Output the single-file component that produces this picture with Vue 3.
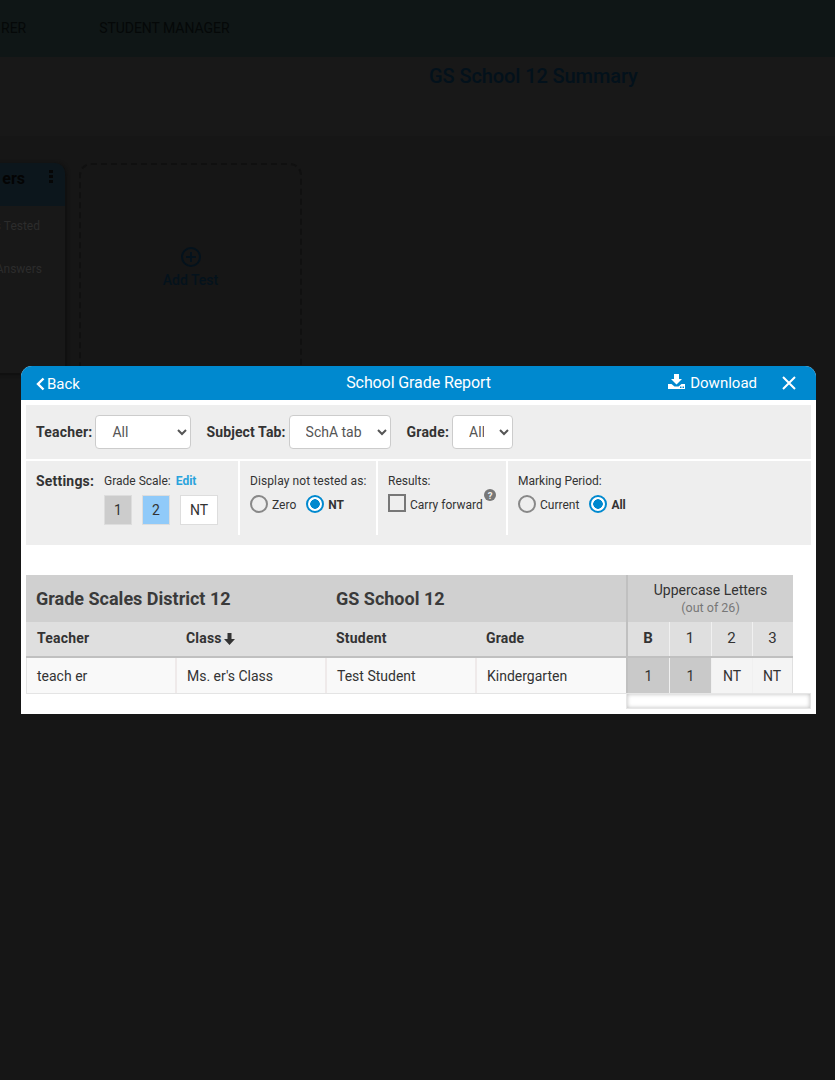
<script setup>
const columns = [
  { label: 'Teacher', value: 'teach er' },
  { label: 'Class', value: "Ms. er's Class", sorted: true },
  { label: 'Student', value: 'Test Student' },
  { label: 'Grade', value: 'Kindergarten' },
];
const scores = [
  { label: 'B', value: '1', bold: true, shaded: true },
  { label: '1', value: '1', shaded: true },
  { label: '2', value: 'NT' },
  { label: '3', value: 'NT' },
];
</script>

<template>
  <main class="page">
    <header class="topbar">
      <span class="nav-cut">RER</span>
      <span class="nav-item">STUDENT MANAGER</span>
    </header>
    <section class="titlebar">
      <h1>GS School 12 Summary</h1>
    </section>
    <section class="cards">
      <article class="test-card">
        <div class="test-head">
          <span>ers</span>
          <i class="dots"><b></b><b></b><b></b></i>
        </div>
        <p class="tested">s Tested</p>
        <p class="answers">Answers</p>
      </article>
      <article class="add-card">
        <svg width="22" height="22" viewBox="0 0 22 22" fill="none" stroke="#04121c" stroke-width="2">
          <circle cx="11" cy="11" r="9" />
          <path d="M11 6v10M6 11h10" />
        </svg>
        <span>Add Test</span>
      </article>
    </section>

    <div class="modal">
      <div class="modal-head">
        <a class="back">
          <svg width="9" height="14" viewBox="0 0 9 14" fill="none" stroke="#fff" stroke-width="2.4">
            <path d="M7.500 1.500 2 7l5.500 5.500" />
          </svg>
          Back
        </a>
        <span class="modal-title">School Grade Report</span>
        <a class="download">
          <svg width="17" height="15" viewBox="0 0 17 15">
            <path fill="#fff" d="M6 0h5v5h3l-5.500 5.500L3 5h3z" />
            <path fill="#fff" d="M0 10h3.500l3 2.500h4l3-2.500H17v5H0z" />
            <path fill="#0089cf" d="M12 12.500h1.500V14H12zM14.500 12.500H16V14h-1.500z" />
          </svg>
          Download
        </a>
        <svg class="close" width="14" height="14" viewBox="0 0 14 14" stroke="#fff" stroke-width="2">
          <path d="M1 1l12 12M13 1 1 13" />
        </svg>
      </div>

      <div class="modal-body">
        <div class="filters">
          <label>Teacher:</label>
          <select class="sel-teacher"><option>All</option></select>
          <label class="next subject">Subject Tab:</label>
          <select class="sel-subject"><option>SchA tab</option></select>
          <label class="next grade">Grade:</label>
          <select class="sel-grade"><option>All</option></select>
        </div>

        <div class="settings">
          <div class="seg seg-scale">
            <strong class="settings-label">Settings:</strong>
            <div>
              <div class="seg-title">Grade Scale: <a class="edit">Edit</a></div>
              <div class="chips">
                <span class="chip chip-grey">1</span>
                <span class="chip chip-blue">2</span>
                <span class="chip chip-white">NT</span>
              </div>
            </div>
          </div>
          <div class="seg seg-display">
            <div class="seg-title">Display not tested as:</div>
            <div class="radios">
              <span class="radio"></span><span class="opt">Zero</span>
              <span class="radio on"></span><span class="opt sel">NT</span>
            </div>
          </div>
          <div class="seg seg-results">
            <div class="seg-title">Results:</div>
            <div class="radios">
              <span class="check"></span><span class="opt">Carry forward</span>
              <svg class="help" width="12" height="12" viewBox="0 0 12 12">
                <circle cx="6" cy="6" r="6" fill="#777" />
                <text x="6" y="9.500" text-anchor="middle" font-size="9.500" font-weight="700" fill="#eee" font-family="Roboto, sans-serif">?</text>
              </svg>
            </div>
          </div>
          <div class="seg seg-period">
            <div class="seg-title">Marking Period:</div>
            <div class="radios">
              <span class="radio"></span><span class="opt">Current</span>
              <span class="radio on"></span><span class="opt sel">All</span>
            </div>
          </div>
        </div>

        <div class="report">
          <div class="report-main">
            <div class="band">
              <span class="band-district">Grade Scales District 12</span>
              <span class="band-school">GS School 12</span>
            </div>
            <div class="cols cols-head">
              <div v-for="c in columns" :key="c.label" class="col-head">
                {{ c.label }}
                <svg v-if="c.sorted" width="11" height="12" viewBox="0 0 11 12" fill="#333">
                  <path d="M3.500 0h4v6H11l-5.500 6L0 6h3.500z" />
                </svg>
              </div>
            </div>
            <div class="cols cols-row">
              <div v-for="c in columns" :key="c.label" class="col-cell">{{ c.value }}</div>
            </div>
          </div>
          <div class="report-side">
            <div class="side-band">
              <div>Uppercase Letters</div>
              <small>(out of 26)</small>
            </div>
            <div class="score-head">
              <div v-for="(s, i) in scores" :key="i" :class="{ bold: s.bold }">{{ s.label }}</div>
            </div>
            <div class="score-row">
              <div v-for="(s, i) in scores" :key="i" :class="{ shaded: s.shaded }">{{ s.value }}</div>
            </div>
            <div class="scrollbar"></div>
          </div>
        </div>
      </div>
    </div>
  </main>
</template>

<style>
html, body { background: #161616; }
</style>

<style scoped>
.page {
  position: relative;
  width: 835px;
  height: 1080px;
  overflow: hidden;
  background: #161616;
  font-family: Roboto, "Liberation Sans", sans-serif;
  color: #333;
}
.topbar {
  height: 57px;
  background: #0f1616;
  display: flex;
  align-items: center;
  font-size: 14px;
  color: #050808;
  padding-bottom: 1px;
  box-sizing: border-box;
}
.nav-cut { margin-left: 1px; }
.nav-item { margin-left: 73px; letter-spacing: -0.05px; }
.titlebar {
  height: 79px;
  background: #181818;
  padding-left: 429px;
  box-sizing: border-box;
}
.titlebar h1 {
  margin: 0;
  padding-top: 7px;
  font-size: 20px;
  line-height: 24px;
  font-weight: 500;
  letter-spacing: -0.1px;
  color: #03111b;
}
.cards {
  display: flex;
  gap: 14px;
  margin: 27px 0 0 -120px;
}
.test-card {
  width: 185px;
  height: 210px;
  border-radius: 0 10px 0 0;
  background: #181818;
  box-shadow: 1px 1px 4px #0c0c0c;
  color: #2c2c2c;
  font-size: 12px;
  text-align: right;
}
.test-head {
  height: 43px;
  background: #0c161c;
  border-radius: 0 10px 0 0;
  display: flex;
  justify-content: flex-end;
  align-items: flex-start;
  box-sizing: border-box;
  padding: 4px 12px 0 0;
  color: #040404;
  font-size: 16px;
  font-weight: 700;
}
.test-head span { margin: 2px 24px 0 0; }
.dots { display: flex; flex-direction: column; gap: 2px; padding-top: 3px; }
.dots b { width: 4px; height: 3px; background: #060606; }
.test-card p { margin: 0; }
.tested { padding: 13px 25px 0 0; }
.answers { padding: 29px 23px 0 0; }
.add-card {
  width: 223px;
  height: 210px;
  box-sizing: border-box;
  border: 2px dashed #101010;
  border-bottom: 0;
  border-radius: 12px 12px 0 0;
  display: flex;
  flex-direction: column;
  align-items: center;
  padding-top: 81px;
  color: #04121c;
  font-size: 14px;
  font-weight: 500;
}
.add-card span { margin-top: 4px; }

.modal {
  position: absolute;
  left: 21px;
  top: 366px;
  width: 795px;
  height: 348px;
  background: #fff;
  border-radius: 11px 11px 0 0;
  overflow: hidden;
}
.modal-head {
  position: relative;
  height: 34px;
  background: #0089cf;
  color: #fff;
  font-size: 15px;
  display: flex;
  align-items: center;
}
.back {
  display: flex;
  align-items: center;
  gap: 2px;
  margin-left: 15px;
  padding-top: 2px;
}
.modal-title {
  position: absolute;
  left: 0;
  right: 0;
  top: 6px;
  line-height: 22px;
  font-size: 16px;
  letter-spacing: -0.1px;
  text-align: center;
  pointer-events: none;
}
.download {
  display: flex;
  align-items: center;
  gap: 5px;
  margin-left: auto;
}
.download svg { margin-bottom: 3px; }
.close { margin: 0 20px 0 25px; }

.modal-body { padding: 5px; }
.filters {
  height: 54px;
  background: #eee;
  display: flex;
  align-items: center;
  padding: 0 0 0 10px;
  font-size: 14px;
  font-weight: 700;
}
.filters label { margin-right: 3px; letter-spacing: 0.2px; }
.filters .next { margin-left: 15px; }
.filters .subject { letter-spacing: 0.12px; }
.filters .grade { margin-left: 16px; }
.filters select {
  height: 34px;
  box-sizing: border-box;
  border: 1px solid #ccc;
  border-radius: 4px;
  background: #fff;
  color: #555;
  font-family: inherit;
  font-size: 14px;
  padding: 0 12px;
}
.sel-teacher { width: 96px; }
.sel-subject { width: 102px; }
.sel-grade { width: 61px; }

.settings {
  margin-top: 2px;
  height: 84px;
  background: #eee;
  display: flex;
  align-items: flex-start;
}
.seg {
  height: 74px;
  box-sizing: border-box;
  padding-top: 12px;
  border-right: 2px solid #fff;
  font-size: 12px;
  line-height: 16px;
}
.seg-scale { width: 214px; display: flex; padding-left: 10px; }
.seg-display { width: 138px; padding-left: 10px; }
.seg-display .seg-title { letter-spacing: 0.1px; }
.seg-results { width: 130px; padding-left: 10px; }
.seg-period { flex: 1; padding-left: 10px; border-right: 0; }
.settings-label { width: 68px; font-size: 14px; line-height: 17px; letter-spacing: 0.2px; }
.edit { color: #29a3dc; font-weight: 700; margin-left: 2px; }
.chips { display: flex; gap: 10px; margin-top: 6px; }
.chip {
  height: 30px;
  box-sizing: border-box;
  border: 1px solid #ddd;
  font-size: 14px;
  line-height: 28px;
  text-align: center;
}
.chip-grey { width: 28px; background: #ccc; }
.chip-blue { width: 28px; background: #90caf9; }
.chip-white { width: 38px; background: #fff; }
.radios {
  display: flex;
  align-items: center;
  gap: 4px;
  margin-top: 6px;
  height: 18px;
}
.radio {
  width: 18px;
  height: 18px;
  box-sizing: border-box;
  border: 2px solid #888;
  border-radius: 50%;
  background: #eee;
}
.radio.on {
  border-color: #0089cf;
  background: radial-gradient(circle, #0089cf 0 4.500px, #fff 5px);
}
.opt + .radio { margin-left: 6px; }
.opt { padding-top: 2px; }
.opt.sel { font-weight: 700; }
.check {
  width: 18px;
  height: 18px;
  box-sizing: border-box;
  border: 2px solid #777;
  background: #eee;
  margin-top: -2px;
}
.help { margin: -18px 0 0 -3px; }

.report { display: flex; margin-top: 30px; }
.report-main { width: 600px; }
.band {
  height: 47px;
  background: #d0d0d0;
  display: flex;
  align-items: center;
  font-size: 18px;
  font-weight: 700;
  color: #3a3a3a;
}
.band-district { width: 300px; padding-left: 10px; box-sizing: border-box; }
.band-school { padding-left: 10px; }
.cols { display: grid; grid-template-columns: repeat(4, 150px); }
.cols-head {
  height: 36px;
  box-sizing: border-box;
  background: #dfdfdf;
  border-bottom: 2px solid #c0c0c0;
}
.col-head {
  display: flex;
  align-items: center;
  gap: 2px;
  padding: 0 0 3px 10px;
  font-size: 14px;
  font-weight: 700;
  letter-spacing: 0.2px;
}
.col-head svg { margin-top: 2px; }
.col-head:first-child { padding-left: 11px; }
.cols-row {
  height: 36px;
  box-sizing: border-box;
  background: #f9f9f9;
  border-bottom: 1px solid #e4e4e4;
  box-shadow: inset 1px 0 #e4e4e4;
}
.col-cell {
  display: flex;
  align-items: center;
  padding-left: 10px;
  margin-left: -1px;
  font-size: 14px;
  border-left: 2px solid #efeaea;
}
.col-cell:first-child { margin-left: 0; padding-left: 11px; border-left: 0; }
.report-side { width: 167px; position: relative; border-left: 2px solid #c0c0c0; box-sizing: border-box; }
.side-band {
  height: 47px;
  background: #d0d0d0;
  text-align: center;
  font-size: 14px;
  line-height: 17px;
  padding-top: 7px;
  box-sizing: border-box;
}
.side-band small { display: block; font-size: 12.500px; line-height: 17px; color: #777; }
.score-head, .score-row { display: grid; grid-template-columns: 42px 42px 41px 40px; box-sizing: border-box; }
.score-head {
  height: 36px;
  background: #dfdfdf;
  border-bottom: 2px solid #c0c0c0;
  font-size: 15px;
  padding-bottom: 0;
}
.score-head div, .score-row div {
  display: flex;
  align-items: center;
  justify-content: center;
  border-right: 1px solid #f0f0f0;
}
.score-head div { padding: 0 1px 2px 0; }
.score-head div:last-child { border-right: 0; }
.score-row div:last-child { border-right: 1px solid #e0e0e0; padding-right: 1px; }
.score-head .bold { font-weight: 700; }
.score-row { height: 35px; font-size: 14px; }
.score-row div { background: #f4f4f4; }
.score-row .shaded { background: #c9c9c9; }
.scrollbar {
  width: 185px;
  height: 16px;
  margin-left: -2px;
  background: #fff;
  box-shadow: inset 0 0 4px #bbb;
  border: 1px solid #e6e6e6;
  box-sizing: border-box;
}
</style>
